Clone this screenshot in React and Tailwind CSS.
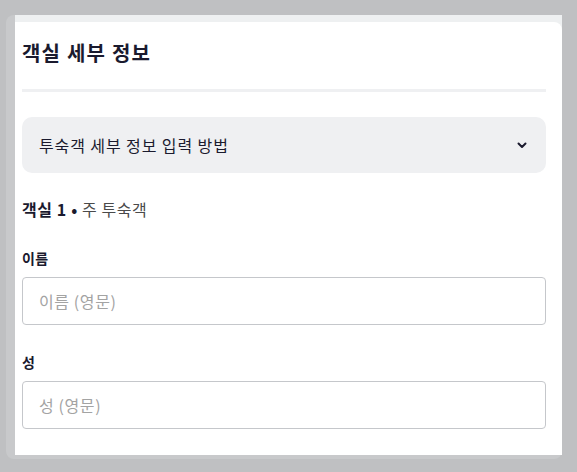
import React from 'react';

const font = { fontFamily: '"Noto Sans CJK KR", "Noto Sans", sans-serif' };

const Field = ({ label, placeholder, className = '' }) => (
  <div className={className}>
    <label className="block text-[14px] font-bold leading-5 tracking-[0.3px] text-[#1a1a2e]">{label}</label>
    <input
      type="text"
      placeholder={placeholder}
      className="mt-[9px] block h-[48px] w-full rounded-[4px] border border-[#c5c7cb] bg-white px-[16px] text-[16px] tracking-[0.6px] text-[#1a1a2e] outline-none placeholder:text-[#a3a3a3]"
    />
  </div>
);

export default function App() {
  return (
    <div className="min-h-[472px] w-[577px] bg-[#bfc0c2] pl-[6px] pt-[22px]" style={font}>
      <div className="w-[556px] rounded-lg bg-[#c8c9cb] pb-[4px] pl-[9px]">
        <div className="-mt-[7px] bg-[#eef0f1] pt-[7px]">
          <div className="rounded-tr-lg bg-white pb-[26px] pl-[7px] pr-[16px] pt-[17px]">
            <h2 className="text-[20px] font-bold leading-7 tracking-[1.2px] text-[#1a1a2e]">객실 세부 정보</h2>
            <div className="mt-[22px] h-[3px] bg-[#eff0f2]" />

            <button className="mt-[25px] flex h-[56px] w-full items-center justify-between rounded-[10px] bg-[#eff0f2] pl-[17px] pr-[18px] text-left">
              <span className="text-[16px] tracking-[0.9px] text-[#1a1a2e]">투숙객 세부 정보 입력 방법</span>
              <svg width="12" height="12" viewBox="0 0 24 24" fill="none" stroke="#1a1a2e" strokeWidth="4" strokeLinecap="round" strokeLinejoin="round">
                <path d="M5 9l7 7 7-7" />
              </svg>
            </button>

            <p className="mt-[24px] text-[16px] leading-6 tracking-[0.6px] text-[#4a4a4a]">
              <span className="font-bold text-[#1a1a2e]">객실 1 •</span> 주 투숙객
            </p>

            <Field className="mt-[27px]" label="이름" placeholder="이름 (영문)" />
            <Field className="mt-[27px]" label="성" placeholder="성 (영문)" />
          </div>
        </div>
      </div>
    </div>
  );
}
